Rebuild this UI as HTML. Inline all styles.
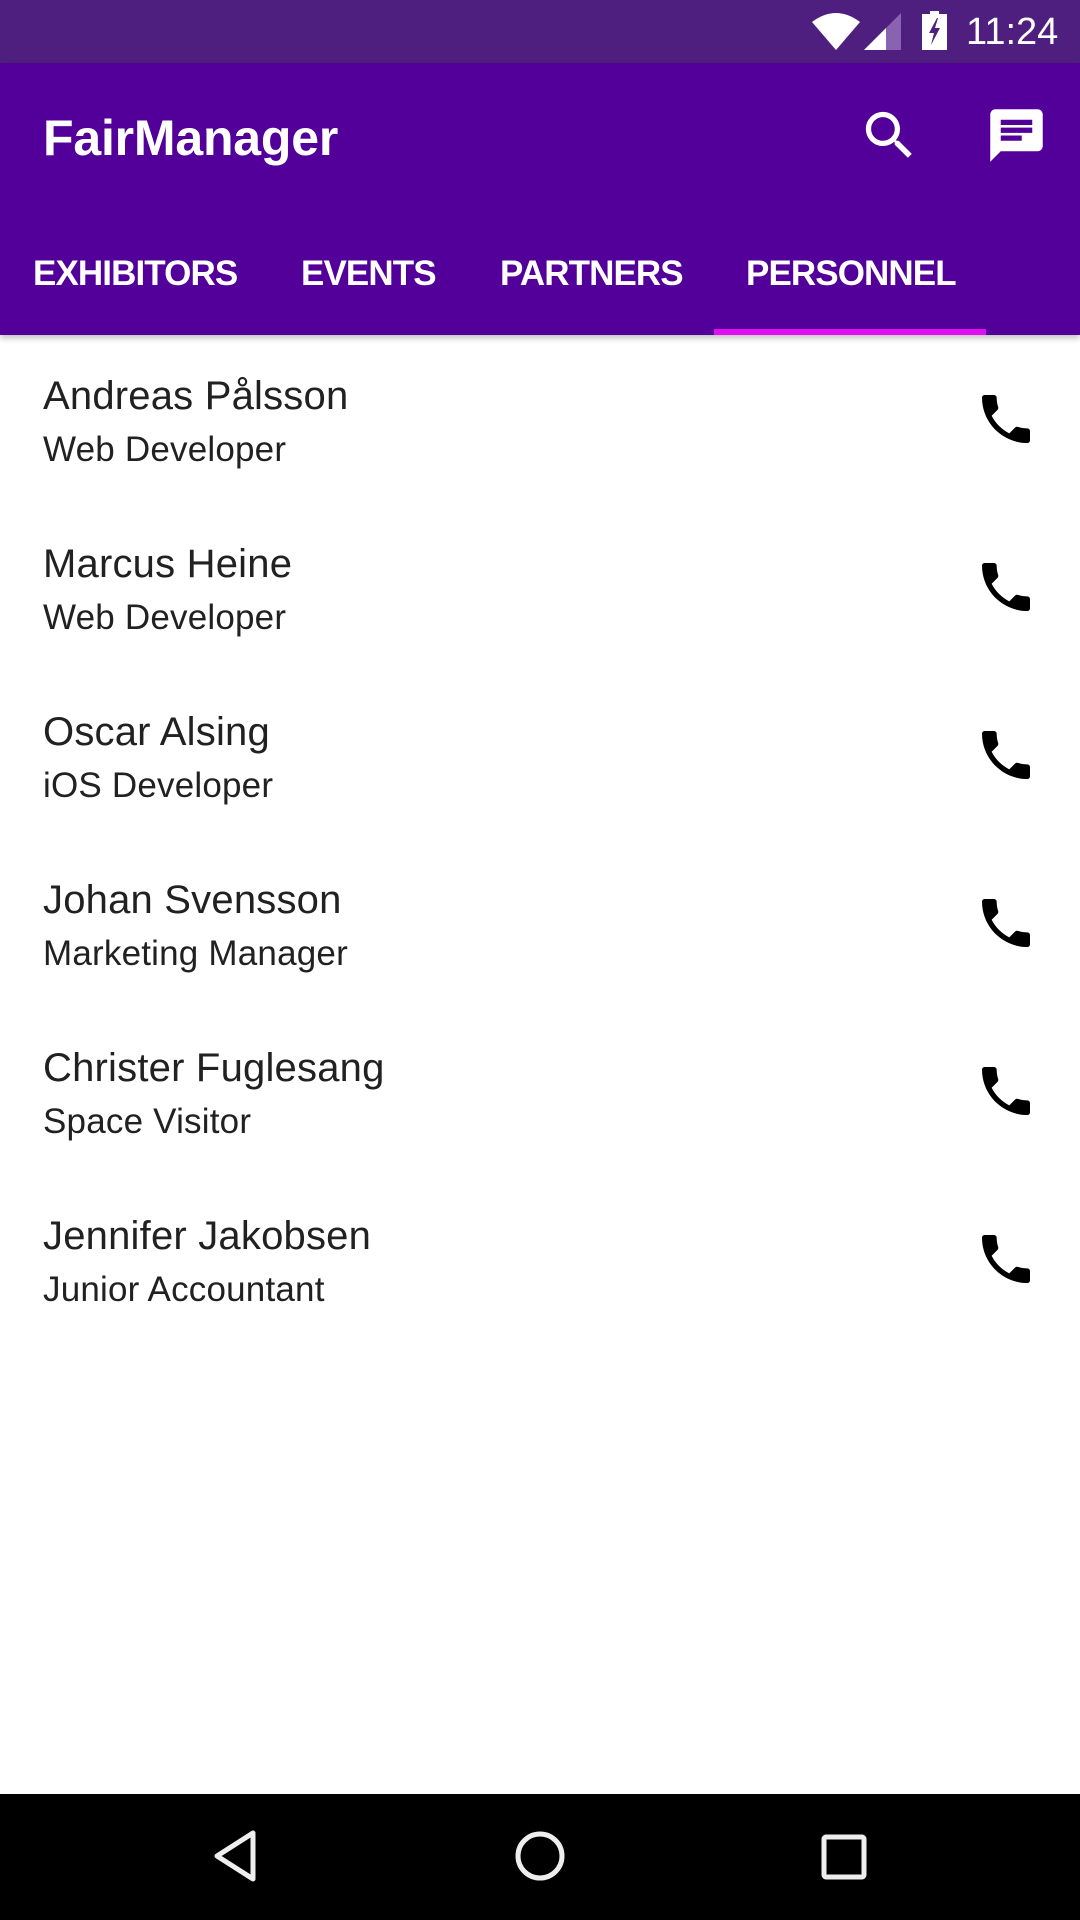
<!DOCTYPE html>
<html><head><meta charset="utf-8"><style>
*{margin:0;padding:0;box-sizing:border-box}
body{width:1080px;height:1920px;position:relative;overflow:hidden;background:#fff;font-family:"Liberation Sans",sans-serif}
.abs{position:absolute}
.status{left:0;top:0;width:1080px;height:63px;background:#4f1f7f}
.bar{left:0;top:63px;width:1080px;height:272px;background:#520099;box-shadow:0 3px 6px rgba(0,0,0,.25)}
.title{left:43px;top:108px;color:#fff;font-size:50px;font-weight:bold;letter-spacing:-0.2px;line-height:60px}
.tab{top:252px;color:#fff;font-size:35px;font-weight:bold;line-height:44px;letter-spacing:-0.9px}
.ind{left:714px;top:329px;width:272px;height:6px;background:#e20ef2}
.name{left:43px;color:#212121;font-size:40px;line-height:48px;letter-spacing:0.2px}
.sub{left:43px;color:#212121;font-size:35px;line-height:42px;letter-spacing:0.2px}
.nav{left:0;top:1794px;width:1080px;height:126px;background:#000}
.time{left:966px;top:10px;color:#fff;font-size:38px;line-height:44px}
</style></head><body>
<div class="abs status"></div>
<svg class="abs" style="left:812px;top:12px" width="48" height="38" viewBox="0 0 48 38"><path d="M0 10 Q24 -8 48 10 L24 38 Z" fill="#fff"/></svg>
<svg class="abs" style="left:864px;top:13px" width="37" height="37" viewBox="0 0 37 37"><path d="M37 0 L37 37 L0 37 Z" fill="#8a63b0"/><path d="M22 15 L22 37 L0 37 Z" fill="#fff"/></svg>
<svg class="abs" style="left:922px;top:11px" width="25" height="39" viewBox="0 0 25 39"><path d="M8 0h9v3h8v36H0V3h8z" fill="#fff"/><path d="M15 7 L7 22 L12 22 L9 34 L18 17 L13 17 L16 7Z" fill="#4f1f7f"/></svg>
<div class="abs time">11:24</div>
<div class="abs bar"></div>
<div class="abs title">FairManager</div>
<svg class="abs" style="left:858px;top:104px" width="63" height="63" viewBox="0 0 24 24"><path fill="#fff" d="M15.5 14h-.79l-.28-.27C15.41 12.59 16 11.110 16 9.5 16 5.91 13.09 3 9.5 3S3 5.91 3 9.5 5.91 16 9.5 16c1.61 0 3.09-.59 4.23-1.57l.27.28v.79l5 4.99L20.49 19l-4.99-5zm-6 0C7.01 14 5 11.99 5 9.5S7.01 5 9.5 5 14 7.01 14 9.5 11.99 14 9.5 14z"/></svg>
<svg class="abs" style="left:985px;top:104px" width="63" height="63" viewBox="0 0 24 24"><path fill="#fff" d="M20 2H4c-1.1 0-1.99.9-1.99 2L2 22l4-4h14c1.1 0 2-.9 2-2V4c0-1.1-.9-2-2-2zM6 9h12v2H6V9zm8 5H6v-2h8v2zm4-6H6V6h12v2z"/></svg>
<div class="abs tab" style="left:33px">EXHIBITORS</div>
<div class="abs tab" style="left:301px">EVENTS</div>
<div class="abs tab" style="left:500px">PARTNERS</div>
<div class="abs tab" style="left:746px">PERSONNEL</div>
<div class="abs ind"></div>

<div class="abs name" style="top:372px">Andreas Pålsson</div><div class="abs sub" style="top:429px">Web Developer</div>
<div class="abs name" style="top:540px">Marcus Heine</div><div class="abs sub" style="top:597px">Web Developer</div>
<div class="abs name" style="top:708px">Oscar Alsing</div><div class="abs sub" style="top:765px">iOS Developer</div>
<div class="abs name" style="top:876px">Johan Svensson</div><div class="abs sub" style="top:933px">Marketing Manager</div>
<div class="abs name" style="top:1044px">Christer Fuglesang</div><div class="abs sub" style="top:1101px">Space Visitor</div>
<div class="abs name" style="top:1212px">Jennifer Jakobsen</div><div class="abs sub" style="top:1269px">Junior Accountant</div>

<svg class="abs" style="left:974px;top:387px" width="64" height="64" viewBox="0 0 24 24"><path fill="#000" d="M6.62 10.79c1.44 2.83 3.76 5.14 6.59 6.59l2.2-2.2c.27-.27.67-.36 1.02-.24 1.12.37 2.33.57 3.57.57.55 0 1 .45 1 1V20c0 .55-.45 1-1 1-9.39 0-17-7.61-17-17 0-.55.45-1 1-1h3.5c.55 0 1 .45 1 1 0 1.25.2 2.45.57 3.57.11.35.03.74-.25 1.02l-2.2 2.2z"/></svg>
<svg class="abs" style="left:974px;top:555px" width="64" height="64" viewBox="0 0 24 24"><path fill="#000" d="M6.62 10.79c1.44 2.830 3.76 5.14 6.59 6.59l2.2-2.2c.27-.27.67-.36 1.02-.24 1.12.37 2.33.57 3.57.57.55 0 1 .45 1 1V20c0 .55-.45 1-1 1-9.39 0-17-7.61-17-17 0-.55.45-1 1-1h3.5c.55 0 1 .45 1 1 0 1.25.2 2.45.57 3.57.11.35.03.74-.25 1.02l-2.2 2.2z"/></svg>
<svg class="abs" style="left:974px;top:723px" width="64" height="64" viewBox="0 0 24 24"><path fill="#000" d="M6.62 10.79c1.44 2.83 3.76 5.14 6.59 6.59l2.2-2.2c.27-.27.67-.36 1.02-.24 1.12.37 2.33.57 3.57.57.55 0 1 .45 1 1V20c0 .55-.45 1-1 1-9.39 0-17-7.61-17-17 0-.55.45-1 1-1h3.5c.55 0 1 .45 1 1 0 1.25.2 2.45.57 3.57.11.35.03.74-.25 1.02l-2.2 2.2z"/></svg>
<svg class="abs" style="left:974px;top:891px" width="64" height="64" viewBox="0 0 24 24"><path fill="#000" d="M6.62 10.79c1.44 2.83 3.76 5.14 6.59 6.59l2.2-2.2c.27-.27.67-.36 1.02-.24 1.12.37 2.33.57 3.57.57.55 0 1 .45 1 1V20c0 .55-.45 1-1 1-9.39 0-17-7.61-17-17 0-.55.45-1 1-1h3.5c.55 0 1 .45 1 1 0 1.25.2 2.45.57 3.57.11.35.03.74-.25 1.02l-2.2 2.2z"/></svg>
<svg class="abs" style="left:974px;top:1059px" width="64" height="64" viewBox="0 0 24 24"><path fill="#000" d="M6.62 10.79c1.44 2.83 3.76 5.14 6.59 6.59l2.2-2.2c.27-.27.67-.36 1.02-.24 1.12.37 2.33.57 3.57.57.55 0 1 .45 1 1V20c0 .55-.45 1-1 1-9.39 0-17-7.61-17-17 0-.55.45-1 1-1h3.5c.55 0 1 .45 1 1 0 1.25.2 2.45.57 3.57.11.35.03.74-.25 1.02l-2.2 2.2z"/></svg>
<svg class="abs" style="left:974px;top:1227px" width="64" height="64" viewBox="0 0 24 24"><path fill="#000" d="M6.62 10.79c1.44 2.83 3.76 5.14 6.59 6.59l2.2-2.2c.27-.27.67-.36 1.02-.24 1.12.37 2.33.57 3.57.57.55 0 1 .45 1 1V20c0 .55-.45 1-1 1-9.39 0-17-7.61-17-17 0-.55.45-1 1-1h3.5c.55 0 1 .45 1 1 0 1.25.2 2.45.57 3.57.11.35.03.74-.25 1.02l-2.2 2.2z"/></svg>

<div class="abs nav"></div>
<svg class="abs" style="left:210px;top:1828px" width="50" height="56" viewBox="0 0 50 56"><path d="M43 5 L43 51 L7 28 Z" fill="none" stroke="#eee" stroke-width="5" stroke-linejoin="round"/></svg>
<svg class="abs" style="left:512px;top:1828px" width="56" height="56" viewBox="0 0 56 56"><circle cx="28" cy="28" r="22" fill="none" stroke="#eee" stroke-width="5"/></svg>
<svg class="abs" style="left:818px;top:1831px" width="52" height="52" viewBox="0 0 52 52"><rect x="6" y="6" width="40" height="40" rx="2" fill="none" stroke="#eee" stroke-width="5"/></svg>
</body></html>
